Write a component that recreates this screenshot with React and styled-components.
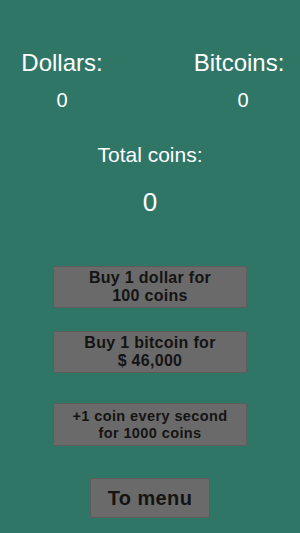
import React, { useState } from "react";
import styled, { createGlobalStyle } from "styled-components";

const GlobalStyle = createGlobalStyle`
  html, body {
    margin: 0;
    padding: 0;
    background: #2f7666;
  }
  * {
    box-sizing: border-box;
  }
`;

const App = () => {
  const [dollars] = useState(0);
  const [bitcoins] = useState(0);
  const [coins] = useState(0);

  return (
    <Screen>
      <GlobalStyle />
      <StatsRow>
        <StatColumn width="124px">
          <StatLabel>Dollars:</StatLabel>
          <StatValue>{dollars}</StatValue>
        </StatColumn>
        <StatColumn width="114px">
          <StatLabel shift="-4px">Bitcoins:</StatLabel>
          <StatValue>{bitcoins}</StatValue>
        </StatColumn>
      </StatsRow>
      <TotalLabel>Total coins:</TotalLabel>
      <TotalValue>{coins}</TotalValue>
      <ShopList>
        <ShopButton>
          Buy 1 dollar for
          <br />
          100 coins
        </ShopButton>
        <ShopButton space="23px">
          Buy 1 bitcoin for
          <br />$ 46,000
        </ShopButton>
        <ShopButton space="30px" small>
          +1 coin every second
          <br />
          for 1000 coins
        </ShopButton>
      </ShopList>
      <MenuButton>To menu</MenuButton>
    </Screen>
  );
};

export default App;

const Screen = styled.div`
  width: 300px;
  height: 533px;
  background: #2f7666;
  display: flex;
  flex-direction: column;
  align-items: center;
  padding-top: 51px;
  font-family: "Liberation Sans", Arial, sans-serif;
  color: #ffffff;
  overflow: hidden;
`;
const StatsRow = styled.div`
  width: 100%;
  display: flex;
  justify-content: space-between;
`;
const StatColumn = styled.div`
  width: ${(props) => props.width};
  display: flex;
  flex-direction: column;
  align-items: center;
`;
const StatLabel = styled.div`
  font-size: 24px;
  line-height: 1;
  white-space: nowrap;
  transform: translateX(${(props) => props.shift || "0px"});
`;
const StatValue = styled.div`
  margin-top: 15px;
  font-size: 20px;
  line-height: 1;
`;
const TotalLabel = styled.div`
  margin-top: 34px;
  font-size: 21px;
  line-height: 1;
`;
const TotalValue = styled.div`
  margin-top: 24px;
  font-size: 26px;
  line-height: 1;
`;
const ShopList = styled.div`
  margin-top: 51px;
  display: flex;
  flex-direction: column;
  align-items: center;
`;
const ShopButton = styled.button`
  margin-top: ${(props) => props.space || "0px"};
  width: 194px;
  height: ${(props) => (props.small ? "43px" : "42px")};
  background: #6a6a6a;
  border: 1px solid #5c5c5c;
  border-radius: 1px;
  color: #141414;
  font-family: "Liberation Sans", Arial, sans-serif;
  font-weight: bold;
  font-size: ${(props) => (props.small ? "14.5px" : "16px")};
  letter-spacing: ${(props) => (props.small ? "0.4px" : "0.3px")};
  line-height: ${(props) => (props.small ? "16.7px" : "18px")};
  text-align: center;
  padding: 0;
  display: flex;
  align-items: center;
  justify-content: center;
  cursor: pointer;
`;
const MenuButton = styled.button`
  margin-top: 32px;
  width: 120px;
  height: 40px;
  background: #6a6a6a;
  border: 1px solid #5c5c5c;
  border-radius: 1px;
  color: #141414;
  font-family: "Liberation Sans", Arial, sans-serif;
  font-weight: bold;
  font-size: 20px;
  letter-spacing: 0.4px;
  line-height: 1;
  padding: 0;
  cursor: pointer;
`;
